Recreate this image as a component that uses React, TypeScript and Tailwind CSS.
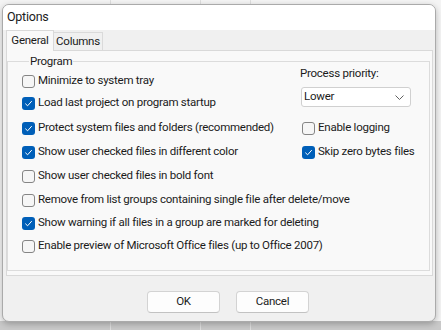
import React from 'react';

const font = "font-['Roboto','Liberation_Sans',sans-serif]";

function CheckBox({ checked }: { checked?: boolean }) {
  return checked ? (
    <span className="flex h-[13px] w-[13px] shrink-0 items-center justify-center rounded-[3px] bg-[#005fb8]">
      <svg width="13" height="13" viewBox="0 0 13 13" fill="none">
        <path d="M3.6 6.9 L5.6 8.8 L9.5 4.4" stroke="#ffffff" strokeWidth="1" strokeLinecap="round" strokeLinejoin="round" />
      </svg>
    </span>
  ) : (
    <span className="block h-[13px] w-[13px] shrink-0 rounded-[3px] border border-[#858585] bg-[#f6f6f6]" />
  );
}

function Option({ label, checked }: { label: string; checked?: boolean }) {
  return (
    <label className="flex h-[22px] items-center gap-[3px] whitespace-nowrap">
      <CheckBox checked={checked} />
      <span>{label}</span>
    </label>
  );
}

export default function App() {
  return (
    <div className={`relative h-[330px] w-[441px] overflow-hidden bg-[#f4f4f4] pl-[2px] pt-[4px] text-[11.5px] tracking-[-0.25px] text-[#1b1b1b] ${font}`}>
      {/* app behind the dialog */}
      <div className="absolute bottom-0 left-0 h-[9px] w-full bg-[#c9c9c9]" />
      <div className="absolute left-[110px] top-0 h-full w-px bg-[#dedede]" />
      <div className="absolute left-[200px] top-0 h-full w-px bg-[#dedede]" />
      <div className="absolute left-[250px] top-0 h-full w-px bg-[#dedede]" />

      <div className="relative flex h-[318px] w-[434px] flex-col overflow-hidden rounded-[7px] border border-[#aaaaaa] bg-[#f0f0f0] shadow-[0_2px_6px_rgba(0,0,0,0.25)]">
        <div className="flex h-[25px] shrink-0 items-center bg-white pl-[4px] text-[12.5px]">Options</div>

        <div className="pl-[3px]">
          <div className="flex h-[20px] items-end">
            <div className="relative z-10 mb-[-1px] flex h-[21px] w-[48px] items-center justify-center border border-b-0 border-[#d9d9d9] bg-[#f9f9f9]">
              General
            </div>
            <div className="flex h-[18px] w-[49px] items-center justify-center border border-l-0 border-b-0 border-[#dadada] bg-[#f0f0f0] pt-[1px]">
              Columns
            </div>
          </div>

          <div className="flex h-[226px] w-[427px] flex-col border border-[#d9d9d9] bg-[#f9f9f9] pb-[4px] pr-[2px]">
            <fieldset className="mt-[2px] flex-1 border border-[#dcdcdc] pl-[14px] pt-[1px]">
              <legend className="ml-[7px] px-[1px] leading-[16px]">Program</legend>

              <div className="flex">
                <div className="w-[278px]">
                  <Option label="Minimize to system tray" />
                  <Option label="Load last project on program startup" checked />
                </div>
                <div className="mt-[-5px]">
                  <div className="h-[16px] leading-[16px]">Process priority:</div>
                  <div className="ml-[1px] mt-[6px] flex h-[20px] w-[110px] items-center justify-between rounded-[3px] border border-[#d0d0d0] bg-white pl-[2px] pr-[6px]">
                    <span>Lower</span>
                    <svg width="9" height="5" viewBox="0 0 9 5" fill="none">
                      <path d="M0.5 0.5 L4.5 4.5 L8.5 0.5" stroke="#606060" strokeWidth="1" />
                    </svg>
                  </div>
                </div>
              </div>

              <div className="mt-[3px] flex">
                <div className="w-[280px]">
                  <Option label="Protect system files and folders (recommended)" checked />
                </div>
                <Option label="Enable logging" />
              </div>
              <div className="mt-[2px] flex">
                <div className="w-[280px]">
                  <Option label="Show user checked files in different color" checked />
                </div>
                <Option label="Skip zero bytes files" checked />
              </div>
              <div className="mt-[2px]">
                <Option label="Show user checked files in bold font" />
              </div>
              <div className="mt-[2px]">
                <Option label="Remove from list groups containing single file after delete/move" />
              </div>
              <div className="mt-[1px]">
                <Option label="Show warning if all files in a group are marked for deleting" checked />
              </div>
              <div className="mt-[1px]">
                <Option label="Enable preview of Microsoft Office files (up to Office 2007)" />
              </div>
            </fieldset>
          </div>
        </div>

        <div className="mt-[15px] flex gap-[16px] pl-[144px]">
          <button className="h-[22px] w-[73px] rounded-[4px] border border-[#d3d3d3] border-b-[#c2c2c2] bg-[#fdfdfd]">OK</button>
          <button className="h-[22px] w-[73px] rounded-[4px] border border-[#d3d3d3] border-b-[#c2c2c2] bg-[#fdfdfd]">Cancel</button>
        </div>
      </div>
    </div>
  );
}
